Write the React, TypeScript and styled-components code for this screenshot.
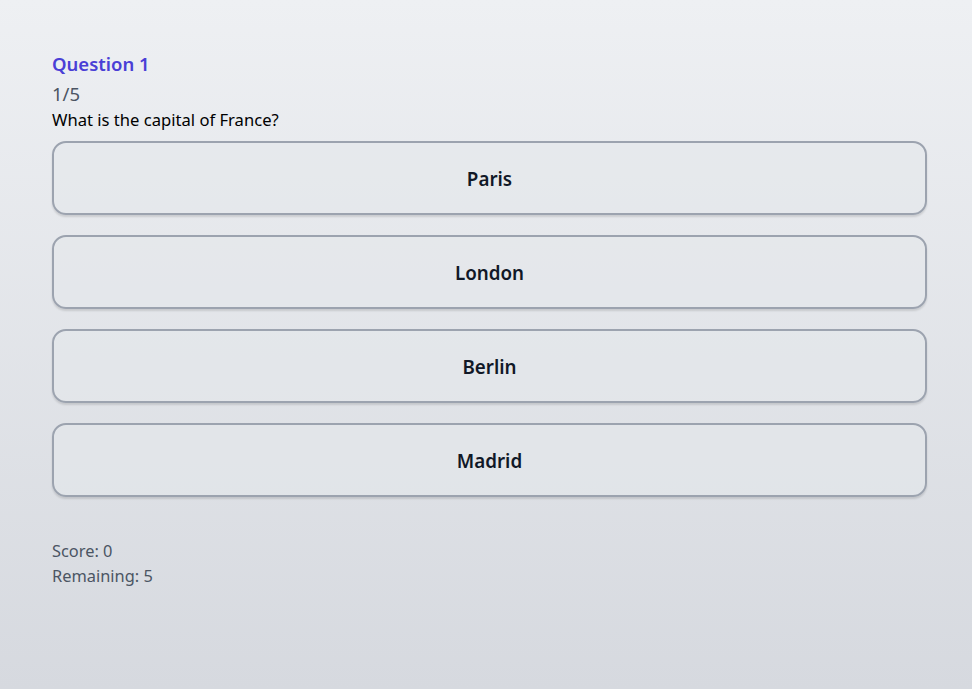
import React from 'react';
import styled, { createGlobalStyle } from 'styled-components';

const GlobalStyle = createGlobalStyle`
	html, body {
		margin: 0;
		padding: 0;
	}
	body {
		font-family: 'Noto Sans', 'Open Sans', sans-serif;
	}
`;

export default function App() {
	const answers = ['Paris', 'London', 'Berlin', 'Madrid'];

	return (
		<>
			<GlobalStyle />
			<Background>
				<Wrapper>
					<Title>Question 1</Title>
					<Counter>1/5</Counter>
					<Prompt>What is the capital of France?</Prompt>
					<Answers>
						{answers.map((a) => (
							<Answer key={a}>{a}</Answer>
						))}
					</Answers>
					<Stats>
						<StatLine>Score: 0</StatLine>
						<StatLine>Remaining: 5</StatLine>
					</Stats>
				</Wrapper>
			</Background>
		</>
	);
}

const Background = styled.div`
	min-height: 689px;
	background: linear-gradient(180deg, #eef0f3 0%, #d6d9df 100%);
	box-sizing: border-box;
`;
const Wrapper = styled.div`
	display: flex;
	flex-direction: column;
	padding: 50px 45px 0 52px;
`;
const Title = styled.h2`
	margin: 0;
	font-size: 18.5px;
	line-height: 28px;
	font-weight: 600;
	color: #4a3fd6;
`;
const Counter = styled.p`
	margin: 2px 0 0;
	font-size: 18.5px;
	line-height: 28px;
	color: #4b5563;
`;
const Prompt = styled.p`
	margin: 0;
	font-size: 16.6px;
	line-height: 24px;
	color: #000;
`;
const Answers = styled.div`
	display: flex;
	flex-direction: column;
	gap: 20px;
	margin-top: 9px;
`;
const Answer = styled.button`
	display: flex;
	justify-content: center;
	align-items: center;
	height: 74px;
	padding: 2px 0 0;
	border: 2px solid #9ca3af;
	border-radius: 14px;
	background: rgba(229, 231, 235, 0.6);
	box-shadow: 0 2px 2px rgba(0, 0, 0, 0.12);
	font-family: inherit;
	font-size: 18.8px;
	font-weight: 600;
	color: #111827;
	cursor: pointer;
`;
const Stats = styled.div`
	margin-top: 41px;
	display: flex;
	flex-direction: column;
`;
const StatLine = styled.p`
	margin: 0;
	font-size: 16.4px;
	line-height: 25px;
	color: #4b5563;
`;
